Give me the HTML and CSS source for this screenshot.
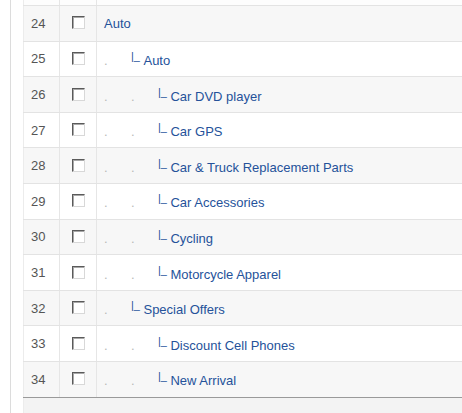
FILE: index.html
```html
<!DOCTYPE html>
<html lang="en">

<head>
  <meta charset="UTF-8" />
  <title>Categories</title>
  <link rel="stylesheet" href="styles.css">
</head>

<body>
  <div class="page">
    <table class="adminlist">
      <colgroup>
        <col class="col-num">
        <col class="col-check">
        <col>
      </colgroup>
      <tbody>
        <!-- tail of the row above, scrolled off -->
        <tr class="cut"><td></td><td></td><td></td></tr>

        <tr class="row0">
          <td class="num">24</td>
          <td class="check"><span class="cb"></span></td>
          <td class="name"><a href="#">Auto</a></td>
        </tr>
        <tr class="row1">
          <td class="num">25</td>
          <td class="check"><span class="cb"></span></td>
          <td class="name"><span class="dot">.</span><a href="#"><sup>|_</sup>&nbsp;Auto</a></td>
        </tr>
        <tr class="row0">
          <td class="num">26</td>
          <td class="check"><span class="cb"></span></td>
          <td class="name"><span class="dot">.</span><span class="dot">.</span><a href="#"><sup>|_</sup>&nbsp;Car DVD player</a></td>
        </tr>
        <tr class="row1">
          <td class="num">27</td>
          <td class="check"><span class="cb"></span></td>
          <td class="name"><span class="dot">.</span><span class="dot">.</span><a href="#"><sup>|_</sup>&nbsp;Car GPS</a></td>
        </tr>
        <tr class="row0">
          <td class="num">28</td>
          <td class="check"><span class="cb"></span></td>
          <td class="name"><span class="dot">.</span><span class="dot">.</span><a href="#"><sup>|_</sup>&nbsp;Car &amp; Truck Replacement Parts</a></td>
        </tr>
        <tr class="row1">
          <td class="num">29</td>
          <td class="check"><span class="cb"></span></td>
          <td class="name"><span class="dot">.</span><span class="dot">.</span><a href="#"><sup>|_</sup>&nbsp;Car Accessories</a></td>
        </tr>
        <tr class="row0">
          <td class="num">30</td>
          <td class="check"><span class="cb"></span></td>
          <td class="name"><span class="dot">.</span><span class="dot">.</span><a href="#"><sup>|_</sup>&nbsp;Cycling</a></td>
        </tr>
        <tr class="row1">
          <td class="num">31</td>
          <td class="check"><span class="cb"></span></td>
          <td class="name"><span class="dot">.</span><span class="dot">.</span><a href="#"><sup>|_</sup>&nbsp;Motorcycle Apparel</a></td>
        </tr>
        <tr class="row0">
          <td class="num">32</td>
          <td class="check"><span class="cb"></span></td>
          <td class="name"><span class="dot">.</span><a href="#"><sup>|_</sup>&nbsp;Special Offers</a></td>
        </tr>
        <tr class="row1">
          <td class="num">33</td>
          <td class="check"><span class="cb"></span></td>
          <td class="name"><span class="dot">.</span><span class="dot">.</span><a href="#"><sup>|_</sup>&nbsp;Discount Cell Phones</a></td>
        </tr>
        <tr class="row0 last">
          <td class="num">34</td>
          <td class="check"><span class="cb"></span></td>
          <td class="name"><span class="dot">.</span><span class="dot">.</span><a href="#"><sup>|_</sup>&nbsp;New Arrival</a></td>
        </tr>
      </tbody>
    </table>
    <div class="footer"></div>
  </div>
</body>

</html>
```

FILE: styles.css
```css
html,
body {
  margin: 0;
  overflow: hidden;
  background-color: #fff;
}

body {
  font-family: 'Liberation Sans', Arial, sans-serif;
  font-size: 13px;
  color: #555;
}

/* Outer frame with the thin line on the left */
.page {
  margin-left: 10px;
  border-left: 1px solid #dcdcdc;
  padding-left: 12px;
  height: 413px;
}

/* Category list */
.adminlist {
  width: 100%;
  border-collapse: collapse;
  border-left: 1px solid #ececec;
}

.col-num {
  width: 36px;
}

.col-check {
  width: 37px;
}

.adminlist td {
  padding: 0 7px;
  border-bottom: 1px solid #e3e3e3;
  border-right: 1px solid #e6e6e6;
  height: 34.6px;
  vertical-align: middle;
  white-space: nowrap;
}

.adminlist td:last-child {
  border-right: none;
}

.adminlist tr.cut td {
  height: 5px;
  background-color: #fdfdfd;
}

.row0 td {
  background-color: #f7f7f7;
}

.row1 td {
  background-color: #fff;
}

.adminlist tr.last td {
  border-bottom: 1px solid #9a9a9a;
}

.num {
  color: #555;
}

.check {
  text-align: center;
}

/* Old style inset checkbox */
.cb {
  display: inline-block;
  width: 11px;
  height: 11px;
  border: 1px solid;
  border-color: #5a5a5a #d8d8d8 #d8d8d8 #5a5a5a;
  box-shadow: inset 1px 1px 0 #a8a8a8;
  background-color: #fff;
  vertical-align: middle;
  margin-top: -3px;
}

.name a {
  color: #25529a;
  text-decoration: none;
}

/* tree indent: one dot per level */
.dot {
  display: inline-block;
  width: 27px;
  color: #b8b8b8;
}

.footer {
  height: 16px;
  background-color: #f3f3f3;
  border-left: 1px solid #ececec;
}
```
